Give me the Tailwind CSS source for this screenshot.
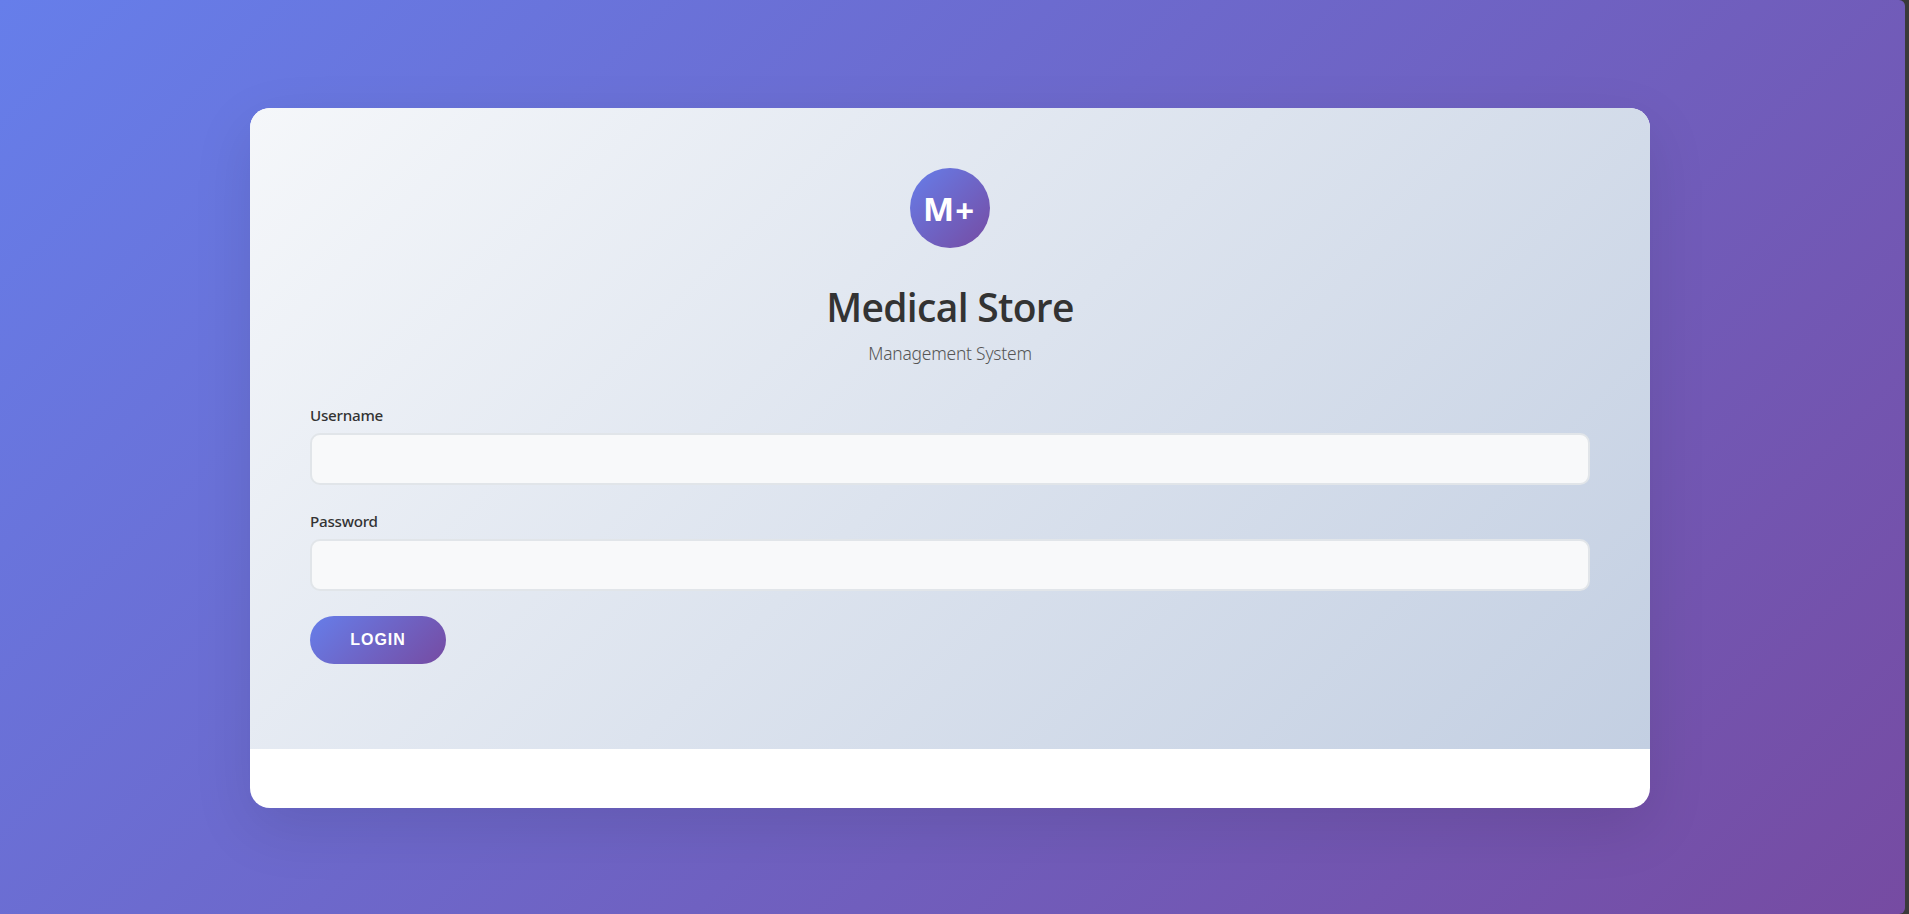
<!DOCTYPE html>
<html lang="en">
<head>
<meta charset="utf-8">
<title>Medical Store</title>
<script src="https://cdn.jsdelivr.net/npm/@tailwindcss/browser@4"></script>
</head>
<body class="h-[914px] overflow-hidden bg-[#3a3a3a] font-['Noto_Sans','Open_Sans',sans-serif] text-[#333333]">
<main class="h-[914px] w-[1905px] rounded-r-[6px] bg-[linear-gradient(135deg,#667eea_0%,#764ba2_100%)] pt-[108px] pl-[250px]">
  <section class="flex h-[700px] w-[1400px] flex-col overflow-hidden rounded-[20px] bg-white shadow-[0_20px_60px_rgba(0,0,0,0.1)]">
    <div class="flex h-[641px] flex-col bg-[linear-gradient(135deg,#f5f7fa_0%,#c3cfe2_100%)] px-[60px] pt-[60px]">
      <header class="flex h-[237px] flex-col items-center">
        <div class="flex h-20 w-20 items-start rounded-full bg-[linear-gradient(135deg,#667eea,#764ba2)] pt-[24px] pl-[13px] font-['Open_Sans',sans-serif] text-[33px] leading-[33px] font-bold text-white"><span>M</span><span class="pt-[2px] pl-[1px] text-[33px]">+</span></div>
        <h1 class="mt-[32px] font-['Open_Sans',sans-serif] text-[39px] leading-[54px] font-semibold tracking-[-0.7px] whitespace-nowrap">Medical Store</h1>
        <p class="mt-[7px] text-[17.4px] leading-[24px] font-light tracking-[-0.2px] whitespace-nowrap text-[#555555]">Management System</p>
      </header>
      <form class="flex flex-col items-start">
        <label for="username" class="mb-2 h-5 text-[15.2px] leading-5 font-medium tracking-[-0.25px]">Username</label>
        <input id="username" type="text" class="h-[52px] w-full rounded-[10px] border-2 border-[#e1e5e9] bg-[#f8f9fa] px-4">
        <label for="password" class="mt-[26px] mb-2 h-5 text-[15.2px] leading-5 font-medium tracking-[-0.25px]">Password</label>
        <input id="password" type="password" class="h-[52px] w-full rounded-[10px] border-2 border-[#e1e5e9] bg-[#f8f9fa] px-4">
        <button type="button" class="mt-[25px] h-12 w-[136px] rounded-full bg-[linear-gradient(135deg,#667eea,#764ba2)] font-['Liberation_Sans',Arial,sans-serif] text-base font-bold tracking-[1px] text-white">LOGIN</button>
      </form>
    </div>
  </section>
</main>
</body>
</html>
